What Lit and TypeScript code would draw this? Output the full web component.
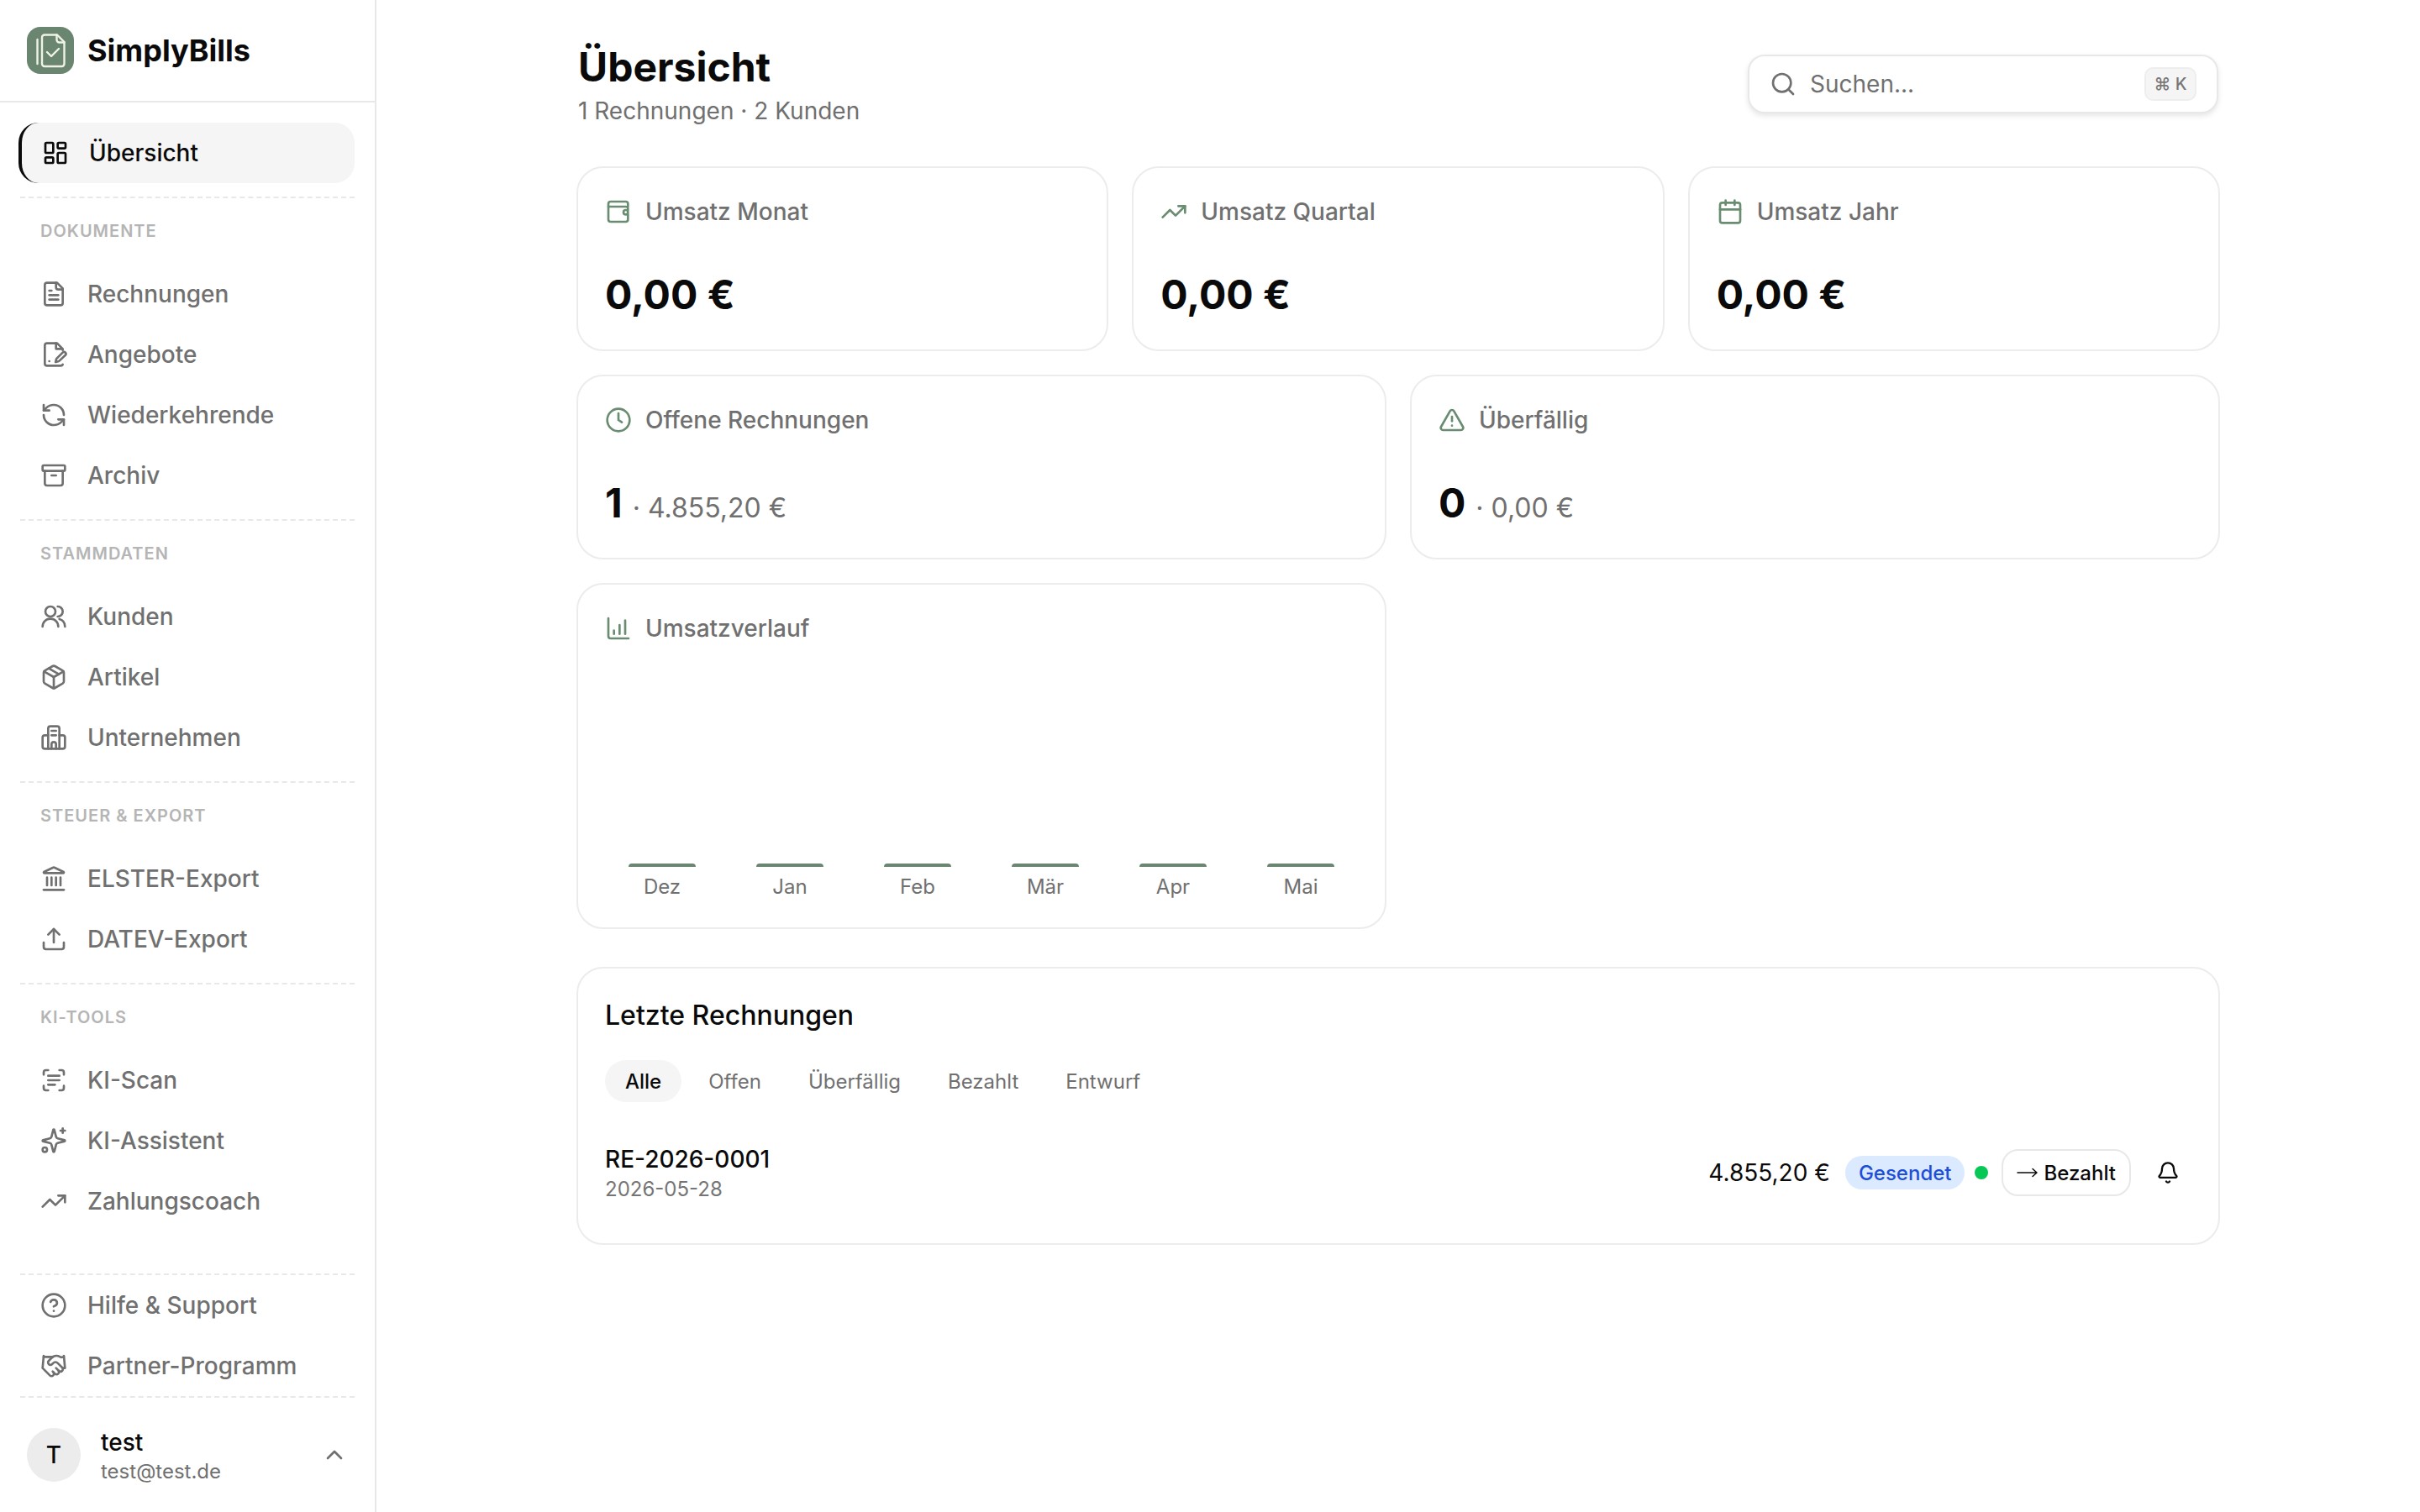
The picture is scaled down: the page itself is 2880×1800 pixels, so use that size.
import { LitElement, html, svg, css } from 'lit';
import { customElement } from 'lit/decorators.js';

const p = (...ds: string[]) => ds.map(d => svg`<path d=${d}></path>`);

const icons: Record<string, unknown> = {
  dashboard: svg`<rect x="3" y="3" width="7" height="9" rx="1"></rect><rect x="14" y="3" width="7" height="5" rx="1"></rect><rect x="14" y="12" width="7" height="9" rx="1"></rect><rect x="3" y="16" width="7" height="5" rx="1"></rect>`,
  file: p('M15 2H6a2 2 0 0 0-2 2v16a2 2 0 0 0 2 2h12a2 2 0 0 0 2-2V7Z', 'M14 2v4a2 2 0 0 0 2 2h4', 'M16 13H8', 'M16 17H8', 'M10 9H8'),
  filePen: p('M20 8V7l-5-5H6a2 2 0 0 0-2 2v16a2 2 0 0 0 2 2h12a2 2 0 0 0 2-1', 'M14 2v5h5', 'M22.4 12.6a1.7 1.7 0 0 0-2.4-2.4l-5.3 5.3a2 2 0 0 0-.5.9l-.6 2.4 2.4-.6a2 2 0 0 0 .9-.5z', 'M8 18h.01'),
  refresh: p('M21 12a9 9 0 0 0-9-9 9.75 9.75 0 0 0-6.74 2.74L3 8', 'M3 3v5h5', 'M3 12a9 9 0 0 0 9 9 9.75 9.75 0 0 0 6.74-2.74L21 16', 'M16 16h5v5'),
  archive: svg`<rect x="2" y="3" width="20" height="5" rx="1"></rect>${p('M4 8v11a2 2 0 0 0 2 2h12a2 2 0 0 0 2-2V8', 'M10 12h4')}`,
  users: svg`<circle cx="9" cy="7.5" r="4.5"></circle>${p('M2 21c0-4 3-7 7-7s7 3 7 7', 'M15.5 3a4.5 4.5 0 0 1 0 9', 'M22 21c0-3.3-2-6-5-6.8')}`,
  box: p('M11 21.73a2 2 0 0 0 2 0l7-4A2 2 0 0 0 21 16V8a2 2 0 0 0-1-1.73l-7-4a2 2 0 0 0-2 0l-7 4A2 2 0 0 0 3 8v8a2 2 0 0 0 1 1.73z', 'M12 22V12', 'M3.29 7 12 12l8.71-5', 'm7.5 4.27 9 5.15'),
  building: p('M7 22V4a2 2 0 0 1 2-2h6a2 2 0 0 1 2 2v18', 'M7 10H4a2 2 0 0 0-2 2v8a2 2 0 0 0 2 2h16a2 2 0 0 0 2-2v-8a2 2 0 0 0-2-2h-3', 'M10 6h4', 'M10 10h4', 'M10 22v-4a2 2 0 0 1 4 0v4'),
  landmark: p('M10 18v-7', 'M11.119 2.198a2 2 0 0 1 1.762 0l7.866 3.847c.476.233.31.955-.22.955H3.473c-.53 0-.695-.722-.22-.955z', 'M14 18v-7', 'M18 18v-7', 'M3 22h18', 'M6 18v-7'),
  upload: p('M12 3v12', 'm17 8-5-5-5 5', 'M21 15v4a2 2 0 0 1-2 2H5a2 2 0 0 1-2-2v-4'),
  scan: p('M3 7V5a2 2 0 0 1 2-2h2', 'M17 3h2a2 2 0 0 1 2 2v2', 'M21 17v2a2 2 0 0 1-2 2h-2', 'M7 21H5a2 2 0 0 1-2-2v-2', 'M7 8h10', 'M7 12h10', 'M7 16h6'),
  sparkles: svg`<circle cx="4" cy="20" r="2"></circle>${p('M9.937 15.5A2 2 0 0 0 8.5 14.063l-6.135-1.582a.5.5 0 0 1 0-.962L8.5 9.936A2 2 0 0 0 9.937 8.5l1.582-6.135a.5.5 0 0 1 .963 0L14.063 8.5A2 2 0 0 0 15.5 9.937l6.135 1.581a.5.5 0 0 1 0 .964L15.5 14.063a2 2 0 0 0-1.437 1.437l-1.582 6.135a.5.5 0 0 1-.963 0z', 'M20 1v4', 'M22 3h-4')}`,
  trend: p('M16 7h6v6', 'm22 7-8.5 8.5-5-5L2 17'),
  help: svg`<circle cx="12" cy="12" r="10"></circle>${p('M9.09 9a3 3 0 0 1 5.83 1c0 2-3 3-3 3', 'M12 17h.01')}`,
  handshake: p('m11 17 2 2a1 1 0 1 0 3-3', 'm14 14 2.5 2.5a1 1 0 1 0 3-3l-3.88-3.88a3 3 0 0 0-4.24 0l-.88.88a1 1 0 1 1-3-3l2.81-2.81a5.79 5.79 0 0 1 7.06-.87l.47.28a2 2 0 0 0 1.42.25L21 4', 'm21 3 1 11h-2', 'M3 3 2 14l6.5 6.5a1 1 0 1 0 3-3', 'M3 4h8'),
  chevron: p('m18 15-6-6-6 6'),
  wallet: svg`<circle cx="18.5" cy="12.5" r="2"></circle>${p('M20.5 7.5V5a2 2 0 0 0-2-2H5a2 2 0 0 0-2 2v14a2 2 0 0 0 2 2h13.5a2 2 0 0 0 2-2v-4.5', 'M3 7.5h15.5a2 2 0 0 1 2 2v1')}`,
  calendar: svg`<rect x="3" y="4" width="18" height="18" rx="2"></rect>${p('M8 2v4', 'M16 2v4', 'M3 10h18')}`,
  clock: svg`<circle cx="12" cy="12" r="10"></circle>${p('M12 6v6l3 2')}`,
  alert: p('m21.73 18-8-14a2 2 0 0 0-3.48 0l-8 14A2 2 0 0 0 4 21h16a2 2 0 0 0 1.73-3', 'M12 9v4', 'M12 17h.01'),
  chart: p('M3 3v16a2 2 0 0 0 2 2h16', 'M18 17V5', 'M13 17V9', 'M8 17v-3'),
  search: svg`<circle cx="11" cy="11" r="8"></circle>${p('m21 21-4.3-4.3')}`,
  bell: p('M10.268 21a2 2 0 0 0 3.464 0', 'M3.262 15.326A1 1 0 0 0 4 17h16a1 1 0 0 0 .74-1.673C19.41 13.956 18 12.499 18 8A6 6 0 0 0 6 8c0 4.499-1.411 5.956-2.738 7.326'),
};

const icon = (name: string) => html`<svg class="ic" viewBox="0 0 24 24">${icons[name]}</svg>`;

type NavGroup = { label: string; items: [string, string][] };

const groups: NavGroup[] = [
  { label: 'Dokumente', items: [['file', 'Rechnungen'], ['filePen', 'Angebote'], ['refresh', 'Wiederkehrende'], ['archive', 'Archiv']] },
  { label: 'Stammdaten', items: [['users', 'Kunden'], ['box', 'Artikel'], ['building', 'Unternehmen']] },
  { label: 'Steuer & Export', items: [['landmark', 'ELSTER-Export'], ['upload', 'DATEV-Export']] },
  { label: 'KI-Tools', items: [['scan', 'KI-Scan'], ['sparkles', 'KI-Assistent'], ['trend', 'Zahlungscoach']] },
];

const months = ['Dez', 'Jan', 'Feb', 'Mär', 'Apr', 'Mai'];
const tabs = ['Alle', 'Offen', 'Überfällig', 'Bezahlt', 'Entwurf'];

@customElement('app-root')
export class AppRoot extends LitElement {
  render() {
    return html`
      <aside class="sidebar">
        <div class="brand">
          <div class="logo">
            <svg viewBox="0 0 56 56">
              <path d="M12.5 15v29"></path>
              <path d="M21 9.5h15l8.5 8.5v26a3 3 0 0 1-3 3H21a3 3 0 0 1-3-3V12.5a3 3 0 0 1 3-3z"></path>
              <path d="M35.5 9.5v6a3 3 0 0 0 3 3h6"></path>
              <path d="M24 30l5 5 9-9"></path>
            </svg>
          </div>
          <span>SimplyBills</span>
        </div>
        <nav class="nav">
          <a class="item active">${icon('dashboard')}Übersicht</a>
          ${groups.map(
            g => html`
              <div class="sep"></div>
              <div class="group-label">${g.label}</div>
              ${g.items.map(([i, t]) => html`<a class="item">${icon(i)}${t}</a>`)}
            `,
          )}
          <div class="spacer"></div>
          <div class="sep flush"></div>
          <a class="item">${icon('help')}Hilfe &amp; Support</a>
          <a class="item">${icon('handshake')}Partner-Programm</a>
          <div class="sep flush"></div>
        </nav>
        <div class="user">
          <div class="avatar">T</div>
          <div class="who">
            <div class="name">test</div>
            <div class="mail">test@test.de</div>
          </div>
          <span class="chev">${icon('chevron')}</span>
        </div>
      </aside>

      <main class="main">
        <div class="content">
          <header class="head">
            <div>
              <h1>Übersicht</h1>
              <div class="sub">1 Rechnungen · 2 Kunden</div>
            </div>
            <div class="search">
              ${icon('search')}
              <span class="ph">Suchen...</span>
              <kbd>⌘ K</kbd>
            </div>
          </header>

          <section class="grid">
            ${this.stat('wallet', 'Umsatz Monat', '0,00 €')}
            ${this.stat('trend', 'Umsatz Quartal', '0,00 €')}
            ${this.stat('calendar', 'Umsatz Jahr', '0,00 €')}
            ${this.stat('clock', 'Offene Rechnungen', '1', '4.855,20 €')}
            ${this.stat('alert', 'Überfällig', '0', '0,00 €')}
            <div class="card wide">
              <div class="label">${icon('chart')}Umsatzverlauf</div>
              <div class="chart">
                ${months.map(m => html`<div class="col"><div class="bar"></div><div class="mon">${m}</div></div>`)}
              </div>
            </div>
          </section>

          <section class="card recent">
            <h2>Letzte Rechnungen</h2>
            <div class="tabs">
              ${tabs.map((t, i) => html`<span class=${i === 0 ? 'tab on' : 'tab'}>${t}</span>`)}
            </div>
            <div class="row">
              <div>
                <div class="no">RE-2026-0001</div>
                <div class="date">2026-05-28</div>
              </div>
              <div class="acts">
                <span class="amount">4.855,20 €</span>
                <span class="badge">Gesendet</span>
                <span class="dot"></span>
                <button class="btn">
                  <svg class="arrow" viewBox="0 0 26 14"><path d="M1 7h23M19 2.5 24 7l-5 4.5"></path></svg>
                  Bezahlt
                </button>
                <span class="bell">${icon('bell')}</span>
              </div>
            </div>
          </section>
        </div>
      </main>
    `;
  }

  private stat(ic: string, label: string, value: string, extra?: string) {
    return html`
      <div class=${extra ? 'card half' : 'card third'}>
        <div class="label">${icon(ic)}${label}</div>
        <div class="value">
          ${value}${extra ? html`<span class="extra"> · ${extra}</span>` : ''}
        </div>
      </div>
    `;
  }

  static styles = css`
    :host {
      display: flex;
      width: 100%;
      min-height: 1800px;
      background: #fff;
      color: #0a0a0a;
      font-family: Inter, 'Liberation Sans', sans-serif;
    }

    .ic {
      width: 32px;
      height: 32px;
      flex: none;
      fill: none;
      stroke: currentColor;
      stroke-width: 2;
      stroke-linecap: round;
      stroke-linejoin: round;
    }

    /* sidebar */
    .sidebar {
      width: 448px;
      height: 1800px;
      flex: none;
      box-sizing: border-box;
      border-right: 2px solid #e8e8e8;
      display: flex;
      flex-direction: column;
    }

    .brand {
      height: 122px;
      flex: none;
      box-sizing: border-box;
      border-bottom: 2px solid #e8e8e8;
      padding: 0 32px;
      display: flex;
      align-items: center;
      gap: 16px;
      font-size: 36px;
      font-weight: 700;
    }

    .logo {
      width: 56px;
      height: 56px;
      border-radius: 16px;
      background: #6a8570;
    }

    .logo svg {
      display: block;
      fill: none;
      stroke: #eef3e6;
      stroke-width: 2.4;
      stroke-linecap: round;
      stroke-linejoin: round;
    }

    .nav {
      flex: 1;
      display: flex;
      flex-direction: column;
      padding: 24px 24px 0;
    }

    .item {
      height: 72px;
      flex: none;
      box-sizing: border-box;
      display: flex;
      align-items: center;
      gap: 24px;
      padding-left: 24px;
      font-size: 28px;
      font-weight: 500;
      color: #707070;
      border-radius: 24px;
    }

    .item.active {
      margin-left: -2px;
      border-left: 4px solid #0a0a0a;
      background: #f5f5f5;
      color: #0a0a0a;
    }

    .sep {
      flex: none;
      margin-top: 16px;
      border-top: 2px dashed #e8e8e8;
    }

    .sep.flush {
      margin-top: 0;
    }

    .group-label {
      height: 78px;
      flex: none;
      display: flex;
      align-items: center;
      padding-left: 24px;
      font-size: 20px;
      font-weight: 600;
      letter-spacing: 1px;
      text-transform: uppercase;
      color: #b5b5b5;
    }

    .spacer {
      flex: 1;
    }

    .user {
      height: 136px;
      flex: none;
      box-sizing: border-box;
      padding: 0 32px;
      display: flex;
      align-items: center;
      gap: 24px;
    }

    .avatar {
      width: 64px;
      height: 64px;
      flex: none;
      border-radius: 50%;
      background: #ececec;
      display: flex;
      align-items: center;
      justify-content: center;
      font-size: 28px;
      font-weight: 500;
    }

    .who {
      flex: 1;
      padding-top: 4px;
    }

    .name {
      font-size: 28px;
      font-weight: 500;
      line-height: 36px;
    }

    .mail {
      font-size: 24px;
      line-height: 34px;
      color: #707070;
    }

    .chev {
      display: flex;
      color: #707070;
    }

    /* main */
    .main {
      flex: 1;
      display: flex;
      justify-content: center;
    }

    .content {
      width: 1956px;
      padding-top: 50px;
    }

    .head {
      display: flex;
      align-items: center;
      justify-content: space-between;
      padding: 0 2px;
    }

    h1 {
      margin: 0;
      font-size: 48px;
      line-height: 60px;
      font-weight: 700;
    }

    .sub {
      margin-top: 2px;
      font-size: 28px;
      line-height: 40px;
      color: #707070;
    }

    .search {
      width: 560px;
      height: 70px;
      margin-bottom: 3px;
      box-sizing: border-box;
      display: flex;
      align-items: center;
      gap: 16px;
      padding: 0 24px;
      border: 2px solid #e8e8e8;
      border-radius: 20px;
      background: #fff;
      box-shadow: 0 3px 6px rgba(0, 0, 0, 0.1);
      color: #707070;
    }

    .ph {
      flex: 1;
      font-size: 28px;
    }

    kbd {
      width: 62px;
      height: 40px;
      box-sizing: border-box;
      display: flex;
      align-items: center;
      justify-content: center;
      border: 2px solid #eee;
      border-radius: 10px;
      background: #f5f5f5;
      font-family: Inter, sans-serif;
      font-size: 20px;
      font-weight: 500;
      color: #777;
    }

    .grid {
      margin-top: 46px;
      display: grid;
      grid-template-columns: repeat(6, 1fr);
      gap: 28px;
    }

    .card {
      box-sizing: border-box;
      border: 2px solid #ececec;
      border-radius: 32px;
      background: #fff;
      padding: 30px 32px;
    }

    .third {
      grid-column: span 2;
      height: 220px;
    }

    .half {
      grid-column: span 3;
      height: 220px;
    }

    .wide {
      grid-column: span 3;
      height: 412px;
    }

    .label {
      height: 44px;
      display: flex;
      align-items: center;
      gap: 16px;
      font-size: 28px;
      font-weight: 500;
      color: #707070;
    }

    .label .ic {
      color: #6a8c70;
    }

    .value {
      margin-top: 47px;
      font-size: 48px;
      line-height: 60px;
      font-weight: 700;
      color: #0a0a0a;
    }

    .extra {
      margin-left: 3px;
      font-size: 32px;
      font-weight: 400;
      color: #707070;
    }

    .chart {
      height: 304px;
      margin: 0 -8px;
      display: grid;
      grid-template-columns: repeat(6, 1fr);
    }

    .col {
      display: flex;
      flex-direction: column;
      align-items: center;
      justify-content: flex-end;
    }

    .bar {
      width: 80px;
      height: 4px;
      border-radius: 4px 4px 0 0;
      background: #6a8570;
    }

    .mon {
      margin-top: 6px;
      font-size: 24px;
      line-height: 36px;
      color: #707070;
    }

    .recent {
      margin-top: 45px;
      height: 331px;
      padding-top: 31px;
    }

    h2 {
      margin: 0;
      font-size: 32px;
      line-height: 50px;
      font-weight: 500;
    }

    .tabs {
      margin-top: 28px;
      display: flex;
      gap: 8px;
    }

    .tab {
      height: 50px;
      padding: 0 24px;
      border-radius: 25px;
      display: flex;
      align-items: center;
      font-size: 24px;
      font-weight: 400;
      color: #707070;
    }

    .tab.on {
      background: #f5f5f5;
      color: #0a0a0a;
      font-weight: 500;
    }

    .row {
      margin-top: 30px;
      height: 108px;
      display: flex;
      align-items: center;
      justify-content: space-between;
    }

    .no {
      font-size: 28px;
      line-height: 40px;
      font-weight: 500;
    }

    .date {
      font-size: 24px;
      line-height: 32px;
      color: #757575;
    }

    .acts {
      display: flex;
      align-items: center;
    }

    .amount {
      font-size: 28px;
      font-weight: 400;
    }

    .badge {
      margin-left: 18px;
      height: 40px;
      padding: 0 16px;
      border-radius: 20px;
      display: flex;
      align-items: center;
      background: #dbeafe;
      color: #1d4ed8;
      font-size: 24px;
      font-weight: 500;
    }

    .dot {
      margin-left: 12px;
      width: 16px;
      height: 16px;
      border-radius: 50%;
      background: #07c755;
    }

    .btn {
      margin-left: 16px;
      height: 56px;
      padding: 0 16px;
      border: 2px solid #e8e8e8;
      border-radius: 20px;
      background: #fff;
      color: #0a0a0a;
      font-family: inherit;
      font-size: 24px;
      font-weight: 500;
      display: flex;
      align-items: center;
      gap: 6px;
    }

    .arrow {
      width: 26px;
      height: 14px;
      flex: none;
      fill: none;
      stroke: currentColor;
      stroke-width: 1.5;
      stroke-linecap: round;
      stroke-linejoin: round;
    }

    .bell {
      margin-left: 16px;
      width: 56px;
      height: 56px;
      display: flex;
      align-items: center;
      justify-content: center;
    }

    .bell .ic {
      width: 28px;
      height: 28px;
    }
  `;
}

declare global {
  interface HTMLElementTagNameMap {
    'app-root': AppRoot;
  }
}
